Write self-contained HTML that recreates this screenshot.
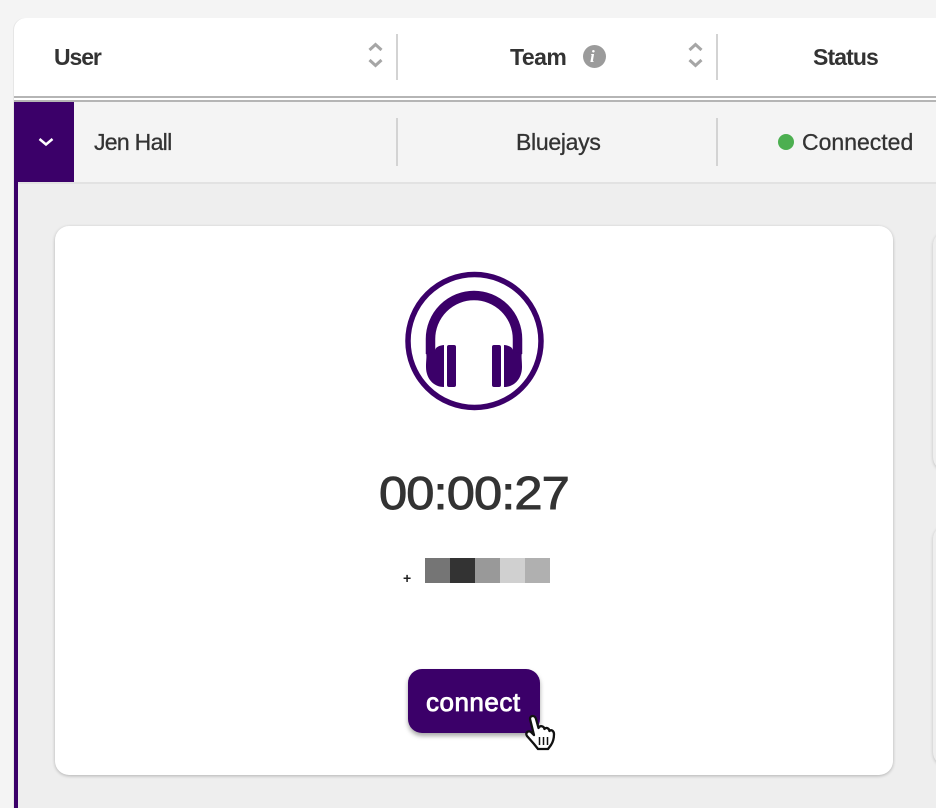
<!DOCTYPE html>
<html><head><meta charset="utf-8">
<style>
html,body{margin:0;padding:0;width:936px;height:808px;overflow:hidden;background:#f4f4f4}
body{position:relative;font-family:"Liberation Sans",sans-serif;color:#333}
div,span{position:absolute}
.t{white-space:nowrap;line-height:30px;height:30px}
.r{-webkit-text-stroke:.3px #333}
.b{font-weight:bold}
.v{background:#d3d3d3;width:2px}
</style></head><body>
<div style="left:13px;top:18px;width:923px;height:790px;background:#e6e6e6;border-radius:12px 0 0 0"></div>
<div style="left:14px;top:18px;width:922px;height:78px;background:#fff;border-radius:12px 0 0 0"></div>
<div style="left:14px;top:96px;width:922px;height:2px;background:#b5b5b5"></div>
<div style="left:14px;top:98px;width:922px;height:2px;background:#fff"></div>
<div style="left:14px;top:100px;width:922px;height:2px;background:#b5b5b5"></div>
<div style="left:14px;top:102px;width:922px;height:80px;background:#f4f4f4"></div>
<div style="left:14px;top:182px;width:922px;height:2px;background:#e2e2e2"></div>
<div style="left:14px;top:184px;width:922px;height:624px;background:#eee"></div>
<div style="left:14px;top:102px;width:60px;height:80px;background:#3b0069"></div>
<div style="left:14px;top:182px;width:4px;height:626px;background:#3b0069"></div>

<div class="v" style="left:396px;top:34px;height:46px"></div>
<div class="v" style="left:716px;top:34px;height:46px"></div>
<div class="v" style="left:396px;top:118px;height:48px"></div>
<div class="v" style="left:716px;top:118px;height:48px"></div>

<span class="t b" style="left:54px;top:42px;font-size:23px;letter-spacing:-1.1px">User</span>
<span class="t b" style="left:510px;top:42px;font-size:23px;letter-spacing:-.5px">Team</span>
<span class="t b" style="left:813px;top:42px;font-size:23px;letter-spacing:-.9px">Status</span>
<span class="t r" style="left:94px;top:127px;font-size:23px;letter-spacing:-.7px">Jen Hall</span>
<span class="t r" style="left:516px;top:127px;font-size:23px;letter-spacing:-.3px">Bluejays</span>
<span class="t r" style="left:802px;top:127px;font-size:23px;letter-spacing:0">Connected</span>
<div style="left:778px;top:134px;width:16px;height:16px;border-radius:50%;background:#4caf50"></div>

<svg style="position:absolute;left:0;top:0" width="936" height="808" viewBox="0 0 936 808" fill="none">
<path d="M369.500 50L375.500 44.500L381.500 50M369.500 60L375.500 65.500L381.500 60" stroke="#a6a6a6" stroke-width="3"/>
<path d="M689.500 50L695.500 44.500L701.500 50M689.500 60L695.500 65.500L701.500 60" stroke="#a6a6a6" stroke-width="3"/>
<path d="M39.500 139L46 144.500L52.500 139" stroke="#fff" stroke-width="2.500"/>
<circle cx="594.500" cy="56.500" r="11.500" fill="#9b9b9b"/>
</svg>
<span class="t b" style="left:590px;top:42px;font-size:17px;color:#fff;font-family:'Liberation Serif',serif;font-style:italic">i</span>

<div style="left:933px;top:231px;width:20px;height:240px;border-radius:14px 0 0 14px;box-shadow:0 1px 3px rgba(0,0,0,.2);background:#eee"></div>
<div style="left:933px;top:525px;width:20px;height:241px;background:#eee;border-radius:14px 0 0 14px;box-shadow:0 1px 3px rgba(0,0,0,.2)"></div>

<div style="left:55px;top:226px;width:838px;height:549px;background:#fff;border-radius:14px;box-shadow:0 1px 3px rgba(0,0,0,.25)"></div>

<svg style="position:absolute;left:0;top:0" width="936" height="808" viewBox="0 0 936 808" fill="none">
<circle cx="474.500" cy="341" r="66.500" stroke="#3b0069" stroke-width="5.500"/>
<path d="M430.500 354V339A43.500 43.500 0 0 1 517.500 339V354" stroke="#3b0069" stroke-width="9.500"/>
<path d="M444 345C439 345.500 436 347 435 350V352L426 353C427 356 426 360 426 367C426 378 433 387 444 387Z" fill="#3b0069"/>
<path d="M504 345C509 345.500 512 347 513 350V352L522 353C521 356 522 360 522 367C522 378 515 387 504 387Z" fill="#3b0069"/>
<rect x="447" y="345" width="9" height="42" rx="2" fill="#3b0069"/>
<rect x="492" y="345" width="9" height="42" rx="2" fill="#3b0069"/>
</svg>

<span class="t" style="left:379px;top:470px;height:46px;line-height:46px;font-size:46px;letter-spacing:-.8px;color:#333;-webkit-text-stroke:.9px #333;transform:scaleX(1.1);transform-origin:0 0">00:00:27</span>

<span class="t b" style="left:403px;top:568px;font-size:14px;color:#222;line-height:20px;height:20px">+</span>
<div style="left:425px;top:558px;width:25px;height:25px;background:#757575"></div>
<div style="left:450px;top:558px;width:25px;height:25px;background:#333"></div>
<div style="left:475px;top:558px;width:25px;height:25px;background:#999"></div>
<div style="left:500px;top:558px;width:25px;height:25px;background:#d0d0d0"></div>
<div style="left:525px;top:558px;width:25px;height:25px;background:#b0b0b0"></div>

<div style="left:408px;top:669px;width:132px;height:64px;background:#3b0069;border-radius:14px;box-shadow:0 3px 5px rgba(0,0,0,.35)"></div>
<span class="t" style="left:426px;top:687px;font-size:26px;color:#fff;letter-spacing:.5px;-webkit-text-stroke:.8px #fff">connect</span>

<svg style="position:absolute;left:0;top:0" width="936" height="808" viewBox="0 0 936 808">
<path d="M530 719C530 715 535 715 536 719L538.500 728C540 725 544 726 544.500 729C546 727 549 728 549.500 731C551 729 554 731 554 734C554 739 553 742 551 745L548 749H538L534 744L527 736C525 733 528 730 531 732L534 735Z" fill="#fff" stroke="#111" stroke-width="2.300" stroke-linejoin="round"/>
<path d="M539.500 737V745M543.500 737V745M547.500 737V745" stroke="#111" stroke-width="1.500" fill="none"/>
</svg>
</body></html>
